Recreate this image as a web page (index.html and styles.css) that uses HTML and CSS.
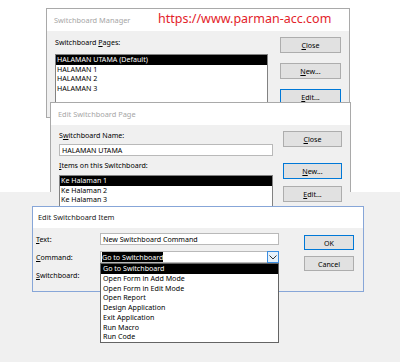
FILE: index.html
```html
<!DOCTYPE html>
<html lang="en">
<head>
    <meta charset="UTF-8">
    <title>Switchboard</title>
    <link rel="stylesheet" href="styles.css">
</head>
<body>
    <div class="desk">
        <!-- Switchboard Manager -->
        <div class="win win-manager">
            <div class="title">Switchboard Manager</div>
            <div class="body">
                <div class="col">
                    <div class="lbl">Switchboard <u>P</u>ages:</div>
                    <div class="list list-pages">
                        <div class="item sel">HALAMAN UTAMA (Default)</div>
                        <div class="item">HALAMAN 1</div>
                        <div class="item">HALAMAN 2</div>
                        <div class="item">HALAMAN 3</div>
                    </div>
                </div>
                <div class="btns">
                    <button class="btn"><u>C</u>lose</button>
                    <button class="btn"><u>N</u>ew...</button>
                    <button class="btn focus"><u>E</u>dit...</button>
                </div>
            </div>
        </div>

        <div class="watermark">https://www.parman-acc.com</div>

        <!-- Edit Switchboard Page -->
        <div class="win win-page">
            <div class="title">Edit Switchboard Page</div>
            <div class="body">
                <div class="col">
                    <div class="lbl">S<u>w</u>itchboard Name:</div>
                    <div class="field">HALAMAN UTAMA</div>
                    <div class="lbl lbl-items"><u>I</u>tems on this Switchboard:</div>
                    <div class="list list-items">
                        <div class="item sel">Ke Halaman 1</div>
                        <div class="item">Ke Halaman 2</div>
                        <div class="item">Ke Halaman 3</div>
                    </div>
                </div>
                <div class="btns">
                    <button class="btn"><u>C</u>lose</button>
                    <button class="btn focus btn-new"><u>N</u>ew...</button>
                    <button class="btn"><u>E</u>dit...</button>
                </div>
            </div>
        </div>

        <!-- Edit Switchboard Item -->
        <div class="win win-item">
            <div class="title">Edit Switchboard Item</div>
            <div class="body">
                <div class="form">
                    <div class="lbl"><u>T</u>ext:</div>
                    <div class="field">New Switchboard Command</div>
                    <div class="lbl"><u>C</u>ommand:</div>
                    <div class="field combo">
                        <span class="hl">Go to Switchboard</span>
                        <span class="arrow">
                            <svg width="8" height="5" viewBox="0 0 8 5"><path d="M0.5 0.5 L4 4 L7.5 0.5" fill="none" stroke="#333" stroke-width="1"/></svg>
                        </span>
                        <div class="dropdown">
                            <div class="item sel">Go to Switchboard</div>
                            <div class="item">Open Form in Add Mode</div>
                            <div class="item">Open Form in Edit Mode</div>
                            <div class="item">Open Report</div>
                            <div class="item">Design Application</div>
                            <div class="item">Exit Application</div>
                            <div class="item">Run Macro</div>
                            <div class="item">Run Code</div>
                        </div>
                    </div>
                    <div class="lbl"><u>S</u>witchboard:</div>
                    <div class="field"></div>
                </div>
                <div class="btns">
                    <button class="btn focus">OK</button>
                    <button class="btn">Cancel</button>
                </div>
            </div>
        </div>
    </div>
</body>
</html>
```

FILE: styles.css
```css
body {
    margin: 0;
    font-family: "Noto Sans", "Open Sans", sans-serif;
    font-size: 7.1px;
    color: #000;
}
.desk {
    position: relative;
    width: 400px;
    height: 362px;
    overflow: hidden;
    background: linear-gradient(#fff 0, #fff 192px, #f0f0f0 192px);
}
.win {
    position: absolute;
    box-sizing: border-box;
    background: #f0f0f0;
    border: 1px solid #a9a9a9;
}
.title {
    height: 22px;
    line-height: 22px;
    padding-left: 7px;
    background: #fff;
    color: #a6a6a6;
    font-size: 7.4px;
}
.body {
    display: flex;
    padding: 0 8px;
}
.lbl {
    height: 10px;
    line-height: 10px;
    white-space: nowrap;
}
.list {
    background: #fff;
    border: 1px solid #828282;
    overflow: hidden;
}
.item {
    height: 9.6px;
    line-height: 9.6px;
    padding-left: 1px;
    white-space: nowrap;
}
.item.sel {
    background: #000;
    color: #fff;
}
.btns {
    display: flex;
    flex-direction: column;
    margin-left: auto;
}
.btn {
    box-sizing: border-box;
    height: 16px;
    padding: 0;
    background: #e1e1e1;
    border: 1px solid #adadad;
    font-family: inherit;
    font-size: 7.1px;
    color: #000;
}
.btn.focus {
    border-color: #0078d7;
}
.field {
    box-sizing: border-box;
    height: 12px;
    line-height: 10px;
    padding-left: 2px;
    background: #fff;
    border: 1px solid #b9b9b9;
    white-space: nowrap;
}

/* Switchboard Manager */
.win-manager {
    left: 46px;
    top: 8px;
    width: 304px;
    height: 110px;
}
.win-manager .col {
    width: 213px;
    padding-top: 6px;
}
.list-pages {
    margin-top: 7px;
    height: 60px;
}
.win-manager .btns {
    width: 61px;
    padding-top: 6px;
    gap: 10px;
}
.watermark {
    position: absolute;
    left: 158px;
    top: 9px;
    line-height: 20px;
    font-size: 12.5px;
    color: #e3222a;
}

/* Edit Switchboard Page */
.win-page {
    left: 50px;
    top: 102px;
    width: 301px;
    height: 90px;
    border-bottom: none;
}
.win-page .col {
    width: 214px;
    padding-top: 5px;
}
.win-page .field {
    margin-top: 4px;
}
.lbl-items {
    margin-top: 4px;
}
.list-items {
    margin-top: 5px;
    height: 40px;
}
.win-page .btns {
    width: 59px;
    padding-top: 6px;
    gap: 7px;
}
.win-page .btn-new {
    margin-top: 9px;
}

/* Edit Switchboard Item */
.win-item {
    left: 32px;
    top: 206px;
    width: 332px;
    height: 86px;
    border-color: #87a6d8;
}
.win-item .title {
    height: 21px;
    line-height: 21px;
    padding-left: 5px;
    color: #1a1a1a;
}
.win-item .body {
    padding: 0 9px 0 3px;
}
.form {
    display: grid;
    grid-template-columns: 64px 179px;
    grid-auto-rows: 12px;
    row-gap: 6px;
    padding-top: 5px;
}
.form .lbl {
    height: 12px;
    line-height: 12px;
}
.combo {
    position: relative;
    padding-left: 1px;
}
.hl {
    background: #000;
    color: #fff;
}
.arrow {
    position: absolute;
    right: -1px;
    top: -1px;
    width: 12px;
    height: 12px;
    box-sizing: border-box;
    border: 1px solid #3c8ee0;
    background: #e5f1fb;
    display: flex;
    align-items: center;
    justify-content: center;
}
.arrow svg {
    display: block;
}
.dropdown {
    position: absolute;
    left: -1px;
    top: 11px;
    width: 179px;
    box-sizing: border-box;
    background: #fff;
    border: 1px solid #646464;
    line-height: normal;
}
.dropdown .item {
    height: 9.75px;
    line-height: 9.75px;
    padding-left: 2px;
}
.win-item .btns {
    width: 50px;
    padding-top: 7px;
    gap: 6px;
}
.win-item .btn {
    height: 15px;
}
```
